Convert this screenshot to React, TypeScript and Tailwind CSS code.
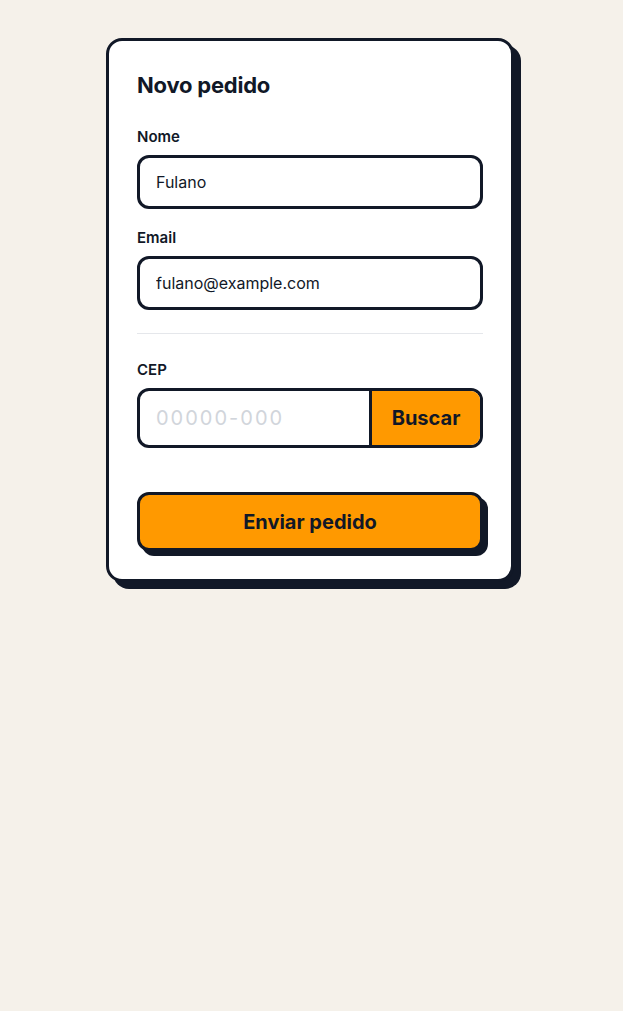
import { useState } from "react";

export default function App() {
  const [nome, setNome] = useState("Fulano");
  const [email, setEmail] = useState("fulano@example.com");
  const [cep, setCep] = useState("");

  return (
    <div
      className="min-h-screen bg-[#f5f1ea] pt-[38px] pl-[106px]"
      style={{ fontFamily: "Inter, 'Noto Sans', sans-serif" }}
    >
      <div className="w-[408px] bg-white border-[3px] border-[#111827] rounded-2xl shadow-[7px_7px_0_#111827] p-7">
        <h1 className="text-[22px] leading-8 font-bold text-[#111827] tracking-[-0.01em]">
          Novo pedido
        </h1>

        <div className="mt-[26px]">
          <label className="block text-[15px] leading-5 font-semibold text-[#111827] mb-2">
            Nome
          </label>
          <input
            value={nome}
            onChange={(e) => setNome(e.target.value)}
            className="w-full h-[54px] px-4 border-[3px] border-[#111827] rounded-xl text-base text-[#111827] outline-none"
          />
        </div>

        <div className="mt-[19px]">
          <label className="block text-[15px] leading-5 font-semibold text-[#111827] mb-2">
            Email
          </label>
          <input
            value={email}
            onChange={(e) => setEmail(e.target.value)}
            className="w-full h-[54px] px-4 border-[3px] border-[#111827] rounded-xl text-base text-[#111827] outline-none"
          />
        </div>

        <div className="h-px bg-[#e5e7eb] mt-[23px] mb-[26px]" />

        <div>
          <label className="block text-[15px] leading-5 font-semibold text-[#111827] mb-2">
            CEP
          </label>
          <div className="flex h-[60px] border-[3px] border-[#111827] rounded-xl overflow-hidden">
            <input
              value={cep}
              onChange={(e) => setCep(e.target.value)}
              placeholder="00000-000"
              className="flex-1 min-w-0 px-4 text-xl tracking-widest text-[#111827] placeholder:text-[#d1d5db] outline-none"
            />
            <button className="w-[111px] border-l-[3px] border-[#111827] bg-[#ff9900] text-xl font-bold text-[#111827]">
              Buscar
            </button>
          </div>
        </div>

        <button className="mt-[44px] w-full h-[59px] bg-[#ff9900] border-[3px] border-[#111827] rounded-xl shadow-[5px_5px_0_#111827] text-xl font-bold text-[#111827]">
          Enviar pedido
        </button>
      </div>
    </div>
  );
}
